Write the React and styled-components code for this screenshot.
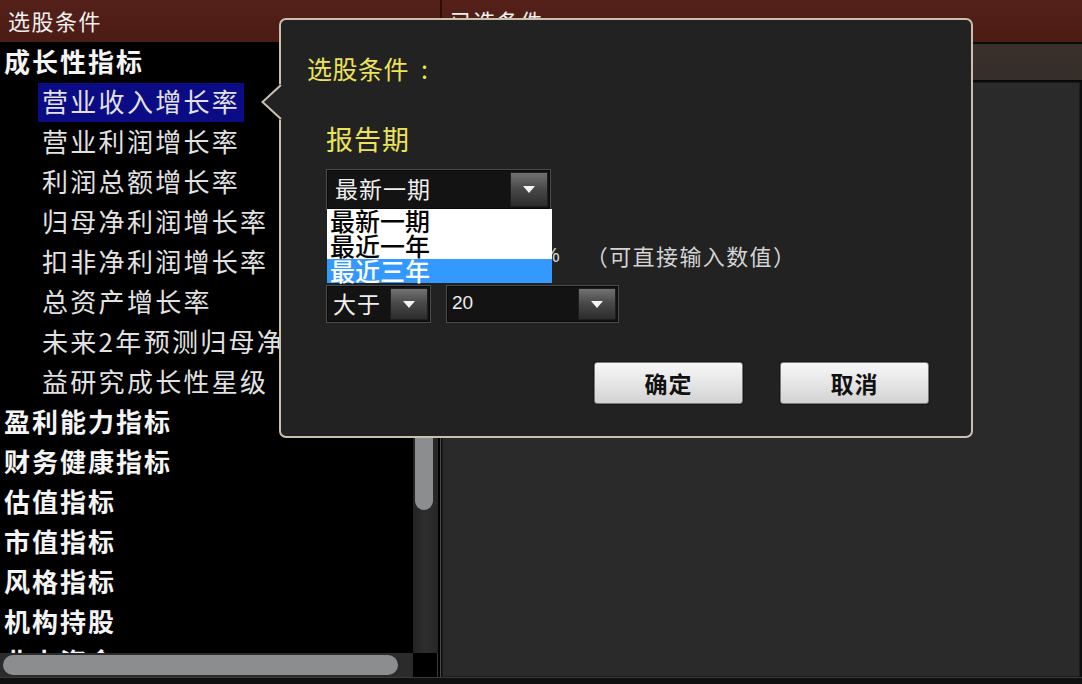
import React from 'react';
import styled, { createGlobalStyle } from 'styled-components';

const Global = createGlobalStyle`
  html, body { margin: 0; padding: 0; background: #000; }
  body { font-family: "Noto Sans CJK SC", "Noto Sans", sans-serif; }
  * { box-sizing: border-box; }
`;

const Screen = styled.div`
  position: relative;
  width: 1082px;
  height: 684px;
  overflow: hidden;
  background: #000;
  display: flex;
  flex-direction: column;
`;

const HeaderBar = styled.div`
  height: 42px;
  flex: none;
  display: flex;
  background: linear-gradient(#55201a, #4b1c14);
`;

const HeaderCell = styled.div`
  width: ${p => (p.$w ? `${p.$w}px` : 'auto')};
  flex: ${p => (p.$w ? 'none' : 1)};
  padding-left: ${p => p.$pl}px;
  color: #f0f0f0;
  font-size: 22px;
  line-height: 40px;
  letter-spacing: 1.5px;
  border-right: ${p => (p.$w ? '2px solid #2c0e09' : 'none')};
`;

const Body = styled.div`
  height: 635px;
  flex: none;
  display: flex;
`;

const LeftCol = styled.div`
  width: 440px;
  flex: none;
  display: flex;
  flex-direction: column;
  background: #000;
`;

const ListArea = styled.div`
  height: 611px;
  display: flex;
`;

const List = styled.div`
  width: 413px;
  overflow: hidden;
  display: flex;
  flex-direction: column;
`;

const Row = styled.div`
  height: 40px;
  flex: none;
  display: flex;
  align-items: center;
  padding-left: ${p => (p.$sub ? 38 : 4)}px;
`;

const ItemText = styled.span`
  display: inline-block;
  white-space: nowrap;
  font-size: 26px;
  line-height: 36px;
  padding: 0 4px 3px ${p => (p.$sub ? 4 : 0)}px;
  letter-spacing: ${p => (p.$bold ? 2 : 2.3)}px;
  font-weight: ${p => (p.$bold ? 700 : 400)};
  color: ${p => (p.$bold ? '#f4f4f4' : '#e2e2e2')};
  background: ${p => (p.$active ? '#0b0b86' : 'transparent')};
`;

const VScroll = styled.div`
  width: 25px;
  background: linear-gradient(90deg, #232323, #2e2e2e 50%, #262626);
  padding: 0 4px 0 2px;
`;

const VThumb = styled.div`
  width: 18px;
  height: 468px;
  background: #8c8d8f;
  border-radius: 0 0 9px 9px;
`;

const HScrollRow = styled.div`
  height: 24px;
  display: flex;
`;

const HTrack = styled.div`
  width: 413px;
  background: #2b2b2b;
  padding: 2px 15px 2px 3px;
`;

const HThumb = styled.div`
  height: 20px;
  border-radius: 10px;
  background: #8c8d8f;
`;

const Corner = styled.div`
  width: 25px;
  background: #000;
  border-right: 1px solid #3a3a3a;
`;

const RightCol = styled.div`
  flex: 1;
  display: flex;
  flex-direction: column;
  border-left: 1px solid #4a4a4a;
  border-top: 2px solid #0a0a0a;
  background: #0e0e0e;
`;

const SubBar = styled.div`
  height: 38px;
  flex: none;
  background: linear-gradient(#3a312c, #352d29);
  border-bottom: 2px solid #0a0a0a;
`;

const Panel = styled.div`
  flex: 1;
  margin: 0 2px 0 1px;
  background: #2a2a2a;
  border: 1px solid #1c1c1c;
`;

const Footer = styled.div`
  flex: 1;
  background: #101010;
  border-top: 1px solid #3a3a3a;
`;

/* ---------- dialog ---------- */

const Dialog = styled.div`
  position: absolute;
  left: 279px;
  top: 18px;
  width: 694px;
  height: 420px;
  background: #222222;
  border: 2px solid #cbbfae;
  border-radius: 7px;
  padding: 32px 42px 0 26px;
  display: flex;
  flex-direction: column;
`;

const Pointer = styled.svg`
  position: absolute;
  left: -20px;
  top: 65px;
  overflow: visible;
`;

const Title = styled.div`
  font-size: 25px;
  line-height: 32px;
  color: #ece35a;
  letter-spacing: 0.5px;
`;

const Colon = styled.span`
  margin-left: 12px;
`;

const Section = styled.div`
  margin-top: 38px;
  padding-left: 19px;
  display: flex;
  flex-direction: column;
`;

const Label = styled.div`
  font-size: 27px;
  line-height: 34px;
  color: #ece35a;
  letter-spacing: 1px;
`;

const SelectBlock = styled.div`
  margin-top: 13px;
`;

const SelectWrap = styled.div`
  position: relative;
  width: ${p => p.$w}px;
  height: ${p => p.$h}px;
  display: flex;
  align-items: stretch;
  background: #131313;
  border: 1px solid #4c4c4c;
  box-shadow: inset 0 0 0 1px #0a0a0a;
  padding: 2px;
`;

const SelectText = styled.div`
  flex: 1;
  padding-left: ${p => p.$pl ?? 5}px;
  color: #eeeeee;
  font-family: ${p => (p.$latin ? '"Liberation Sans", Arial, sans-serif' : 'inherit')};
  font-size: ${p => p.$fs}px;
  line-height: ${p => p.$lh}px;
  letter-spacing: ${p => (p.$latin ? 0 : 1)}px;
  white-space: nowrap;
`;

const ArrowBtn = styled.div`
  width: 38px;
  flex: none;
  display: flex;
  align-items: center;
  justify-content: center;
  background: linear-gradient(#727272, #4a4a4a 45%, #2c2c2c);
  border: 1px solid #1e1e1e;
  border-radius: 1px;
`;

const Tri = styled.div`
  width: 0;
  height: 0;
  border-left: 6px solid transparent;
  border-right: 6px solid transparent;
  border-top: 7px solid #f4f4f4;
`;

const DropList = styled.div`
  position: absolute;
  left: 0px;
  top: 100%;
  width: 225px;
  background: #ffffff;
  z-index: 2;
  display: flex;
  flex-direction: column;
`;

const DropItem = styled.div`
  height: ${p => p.$h}px;
  padding-left: 3px;
  font-size: 25px;
  line-height: 22px;
  font-weight: 500;
  white-space: nowrap;
  color: ${p => (p.$sel ? '#ffffff' : '#050505')};
  background: ${p => (p.$sel ? '#3399ff' : 'transparent')};
  overflow: visible;
`;

const InfoRow = styled.div`
  margin-top: 25px;
  height: 40px;
  display: flex;
  align-items: center;
`;

const Spacer = styled.div`
  width: 216px;
`;

const Pct = styled.span`
  font-family: "Liberation Sans", Arial, sans-serif;
  font-size: 20px;
  color: #d8d8d8;
`;

const Hint = styled.span`
  margin-left: 26px;
  font-size: 22px;
  color: #d4d4d4;
  letter-spacing: 1.4px;
`;

const CondRow = styled.div`
  margin-top: 10px;
  display: flex;
  gap: 15px;
`;

const BtnRow = styled.div`
  margin-top: 39px;
  display: flex;
  justify-content: flex-end;
  gap: 37px;
`;

const Button = styled.div`
  width: 149px;
  height: 42px;
  display: flex;
  align-items: center;
  justify-content: center;
  background: linear-gradient(#f6f6f6, #e6e6e6 50%, #d2d2d2);
  border: 1px solid #7a7a7a;
  border-radius: 3px;
  box-shadow: 0 0 0 1px #181818;
  font-size: 23px;
  font-weight: 700;
  color: #111;
  letter-spacing: 1px;
`;

const categories1 = ['成长性指标'];
const subs = [
  '营业收入增长率',
  '营业利润增长率',
  '利润总额增长率',
  '归母净利润增长率',
  '扣非净利润增长率',
  '总资产增长率',
  '未来2年预测归母净',
  '益研究成长性星级',
];
const categories2 = ['盈利能力指标', '财务健康指标', '估值指标', '市值指标', '风格指标', '机构持股', '北上资金'];

export default function App() {
  return (
    <Screen>
      <Global />
      <HeaderBar>
        <HeaderCell $w={442} $pl={8}>选股条件</HeaderCell>
        <HeaderCell $pl={8}>已选条件</HeaderCell>
      </HeaderBar>
      <Body>
        <LeftCol>
          <ListArea>
            <List>
              {categories1.map(c => (
                <Row key={c}>
                  <ItemText $bold>{c}</ItemText>
                </Row>
              ))}
              {subs.map((s, i) => (
                <Row key={s} $sub>
                  <ItemText $sub $active={i === 0}>{s}</ItemText>
                </Row>
              ))}
              {categories2.map(c => (
                <Row key={c}>
                  <ItemText $bold>{c}</ItemText>
                </Row>
              ))}
            </List>
            <VScroll>
              <VThumb />
            </VScroll>
          </ListArea>
          <HScrollRow>
            <HTrack>
              <HThumb />
            </HTrack>
            <Corner />
          </HScrollRow>
        </LeftCol>
        <RightCol>
          <SubBar />
          <Panel />
        </RightCol>
      </Body>
      <Footer />

      <Dialog>
        <Pointer width="22" height="36" viewBox="0 0 22 36">
          <polygon points="23,-1 19,-1 1,17 19,35 23,35" fill="#222222" />
          <polyline points="20,0 1.5,17 20,34" fill="none" stroke="#cbbfae" strokeWidth="2" />
        </Pointer>
        <Title>选股条件<Colon>:</Colon></Title>
        <Section>
          <Label>报告期</Label>
          <SelectBlock>
            <SelectWrap $w={225} $h={41}>
              <SelectText $fs={23} $lh={33} $pl={6}>最新一期</SelectText>
              <ArrowBtn><Tri /></ArrowBtn>
              <DropList>
                <DropItem $h={25}>最新一期</DropItem>
                <DropItem $h={25}>最近一年</DropItem>
                <DropItem $h={24} $sel>最近三年</DropItem>
              </DropList>
            </SelectWrap>
          </SelectBlock>
          <InfoRow>
            <Spacer />
            <Pct>%</Pct>
            <Hint>（可直接输入数值）</Hint>
          </InfoRow>
          <CondRow>
            <SelectWrap $w={105} $h={38}>
              <SelectText $fs={23} $lh={30} $pl={4}>大于</SelectText>
              <ArrowBtn><Tri /></ArrowBtn>
            </SelectWrap>
            <SelectWrap $w={173} $h={38}>
              <SelectText $fs={19} $lh={29} $pl={3} $latin>20</SelectText>
              <ArrowBtn><Tri /></ArrowBtn>
            </SelectWrap>
          </CondRow>
        </Section>
        <BtnRow>
          <Button>确定</Button>
          <Button>取消</Button>
        </BtnRow>
      </Dialog>
    </Screen>
  );
}
